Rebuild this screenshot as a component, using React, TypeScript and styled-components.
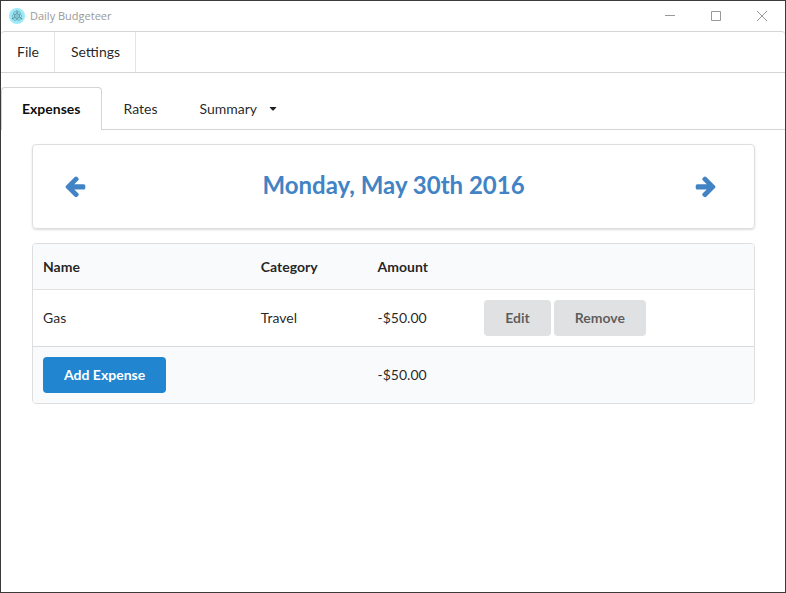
import React from "react";
import styled, { createGlobalStyle } from "styled-components";

const GlobalStyle = createGlobalStyle`
  *, *::before, *::after { box-sizing: border-box; }
  body {
    margin: 0;
    background: #fff;
    color: rgba(0, 0, 0, 0.87);
    font: 14px/18px Lato, "Liberation Sans", sans-serif;
  }
  button { font: inherit; color: inherit; border: 0; background: none; padding: 0; margin: 0; cursor: pointer; }
`;

const Window = styled.div`
  display: flex;
  flex-direction: column;
  min-height: 100vh;
  border: 1px solid #3b3a3b;
`;

const TitleBar = styled.header`
  display: flex;
  align-items: center;
  height: 30px;
  padding-left: 8px;
  color: #999;
`;

const WindowTitle = styled.span`
  flex: 1;
  margin-left: 5px;
  font: 11px/16px "Open Sans", "Noto Sans", sans-serif;
`;

const WindowButton = styled.button`
  display: grid;
  place-items: center;
  width: 46px;
  height: 30px;
`;

const MenuBar = styled.nav`
  display: flex;
  height: 42px;
  border: solid #d4d4d5;
  border-width: 1px 0;
  border-radius: 4px 4px 0 0;
`;

const MenuItem = styled.button`
  padding: 0 15px 0 16px;
  border-right: 1px solid #e4e4e5;
`;

const TabBar = styled.div`
  display: flex;
  height: 43px;
  margin-top: 14px;
  border-bottom: 1px solid #d4d4d5;
`;

const Tab = styled.button<{ $active?: boolean }>`
  display: flex;
  align-items: center;
  height: 43px;
  padding: 0 ${(p) => (p.$active ? 21 : 20)}px 0 20px;
  border: ${(p) => (p.$active ? "1px solid #d4d4d5" : "1px solid transparent")};
  border-bottom: 0;
  border-radius: 4px 4px 0 0;
  background: ${(p) => (p.$active ? "#fff" : "transparent")};
  color: ${(p) => (p.$active ? "rgba(0, 0, 0, 0.95)" : "inherit")};
  font-weight: ${(p) => (p.$active ? 700 : 400)};
`;

const Caret = styled.svg`
  margin-left: 12px;
`;

const Content = styled.main`
  display: flex;
  flex-direction: column;
  gap: 14px;
  padding: 14px 30px 14px 31px;
`;

const DateBar = styled.section`
  display: flex;
  align-items: center;
  justify-content: space-between;
  height: 85px;
  padding: 0 30px 2px;
  border: 1px solid #dededf;
  border-radius: 4px;
  box-shadow: 0 1px 2px rgba(34, 36, 38, 0.15);
  color: #4183c4;
`;

const DateTitle = styled.h2`
  margin: 0;
  padding-bottom: 2px;
  font-size: 24px;
  line-height: 30px;
  font-weight: 700;
`;

const ArrowButton = styled.button`
  display: grid;
  place-items: center;
  margin-right: 6px;
`;

const TableFrame = styled.div`
  border: 1px solid #dededf;
  border-radius: 4px;
  overflow: hidden;
`;

const Table = styled.table`
  width: 100%;
  border-collapse: separate;
  border-spacing: 0;
  table-layout: fixed;
`;

const Column = styled.col<{ $share?: number }>`
  width: ${(p) => (p.$share ? `${p.$share}%` : "auto")};
`;

const HeadCell = styled.th`
  height: 46px;
  padding: 0 10px;
  border-bottom: 1px solid #e1e2e3;
  background: #f9fafb;
  text-align: left;
  font-weight: 700;
`;

const Cell = styled.td`
  height: 56px;
  padding: 0 10px;
`;

const FootCell = styled.td`
  height: 57px;
  padding: 0 10px;
  border-top: 1px solid #dadbdc;
  background: #f9fafb;
`;

const Actions = styled.div`
  display: flex;
  gap: 3px;
`;

const Button = styled.button<{ $primary?: boolean }>`
  height: 36px;
  padding: 0 21px;
  border-radius: 4px;
  background: ${(p) => (p.$primary ? "#2185d0" : "#e0e1e2")};
  color: ${(p) => (p.$primary ? "#fff" : "rgba(0, 0, 0, 0.6)")};
  font-weight: 700;
`;

const arrowPaths = {
  left: "M1664 896v128q0 53-32.5 90.5t-84.5 37.5h-704l293 294q38 36 38 90t-38 90l-75 76q-37 37-90 37-52 0-91-37l-651-652q-37-37-37-90 0-52 37-91l651-650q38-38 91-38 52 0 90 38l75 74q38 38 38 91t-38 91l-293 293h704q52 0 84.5 37.5t32.5 90.5z",
  right: "M1600 960q0 54-37 91l-651 651q-39 37-91 37-51 0-90-37l-75-75q-38-38-38-91t38-91l293-293h-704q-52 0-84.5-37.5t-32.5-90.5v-128q0-53 32.5-90.5t84.5-37.5h704l-293-294q-38-36-38-90t38-90l75-75q38-38 90-38 53 0 91 38l651 651q37 35 37 90z",
};

function Arrow({ direction }: { direction: "left" | "right" }) {
  return (
    <svg width="24" height="24" viewBox="0 0 1792 1792" fill="currentColor" aria-hidden="true">
      <path d={arrowPaths[direction]} />
    </svg>
  );
}

function AppIcon() {
  return (
    <svg width="16" height="16" viewBox="0 0 32 32" fill="none" aria-hidden="true">
      <circle cx="16" cy="16" r="16" fill="#9feaf9" />
      <g stroke="#4f8d99" strokeWidth="1.2">
        <ellipse cx="16" cy="16" rx="10" ry="4" />
        <ellipse cx="16" cy="16" rx="10" ry="4" transform="rotate(60 16 16)" />
        <ellipse cx="16" cy="16" rx="10" ry="4" transform="rotate(120 16 16)" />
      </g>
      <circle cx="16" cy="16" r="1.5" fill="#4f8d99" />
      <circle cx="7" cy="21" r="1.6" fill="#4f8d99" />
      <circle cx="25" cy="21" r="1.6" fill="#4f8d99" />
      <circle cx="16" cy="6" r="1.6" fill="#4f8d99" />
    </svg>
  );
}

const expenses = [{ name: "Gas", category: "Travel", amount: "-$50.00" }];

export default function App() {
  return (
    <>
      <GlobalStyle />
      <Window>
        <TitleBar>
          <AppIcon />
          <WindowTitle>Daily Budgeteer</WindowTitle>
          <WindowButton aria-label="Minimize">
            <svg width="10" height="10" stroke="currentColor"><path d="M0 4.5h10" /></svg>
          </WindowButton>
          <WindowButton aria-label="Maximize">
            <svg width="10" height="10" stroke="currentColor" fill="none"><path d="M.5.5h9v9h-9z" /></svg>
          </WindowButton>
          <WindowButton aria-label="Close">
            <svg width="10" height="10" stroke="currentColor"><path d="M0 0l10 10M10 0L0 10" /></svg>
          </WindowButton>
        </TitleBar>
        <MenuBar>
          <MenuItem>File</MenuItem>
          <MenuItem>Settings</MenuItem>
        </MenuBar>
        <TabBar role="tablist">
          <Tab role="tab" aria-selected="true" $active>Expenses</Tab>
          <Tab role="tab" aria-selected="false">Rates</Tab>
          <Tab role="tab" aria-selected="false">
            Summary
            <Caret width="8" height="4" viewBox="0 0 8 4" fill="currentColor" aria-hidden="true">
              <path d="M1 0h6q.5.2.2.6L4.5 3.4q-.5.4-1 0L.8.6Q.5.2 1 0z" />
            </Caret>
          </Tab>
        </TabBar>
        <Content>
          <DateBar>
            <ArrowButton aria-label="Previous day"><Arrow direction="left" /></ArrowButton>
            <DateTitle>Monday, May 30th 2016</DateTitle>
            <ArrowButton aria-label="Next day"><Arrow direction="right" /></ArrowButton>
          </DateBar>
          <TableFrame>
            <Table>
              <colgroup>
                <Column $share={30.2} />
                <Column $share={16.2} />
                <Column $share={14.8} />
                <Column />
              </colgroup>
              <thead>
                <tr>
                  <HeadCell scope="col">Name</HeadCell>
                  <HeadCell scope="col">Category</HeadCell>
                  <HeadCell scope="col">Amount</HeadCell>
                  <HeadCell />
                </tr>
              </thead>
              <tbody>
                {expenses.map((e) => (
                  <tr key={e.name}>
                    <Cell>{e.name}</Cell>
                    <Cell>{e.category}</Cell>
                    <Cell>{e.amount}</Cell>
                    <Cell>
                      <Actions>
                        <Button>Edit</Button>
                        <Button>Remove</Button>
                      </Actions>
                    </Cell>
                  </tr>
                ))}
              </tbody>
              <tfoot>
                <tr>
                  <FootCell><Button $primary>Add Expense</Button></FootCell>
                  <FootCell />
                  <FootCell>-$50.00</FootCell>
                  <FootCell />
                </tr>
              </tfoot>
            </Table>
          </TableFrame>
        </Content>
      </Window>
    </>
  );
}
